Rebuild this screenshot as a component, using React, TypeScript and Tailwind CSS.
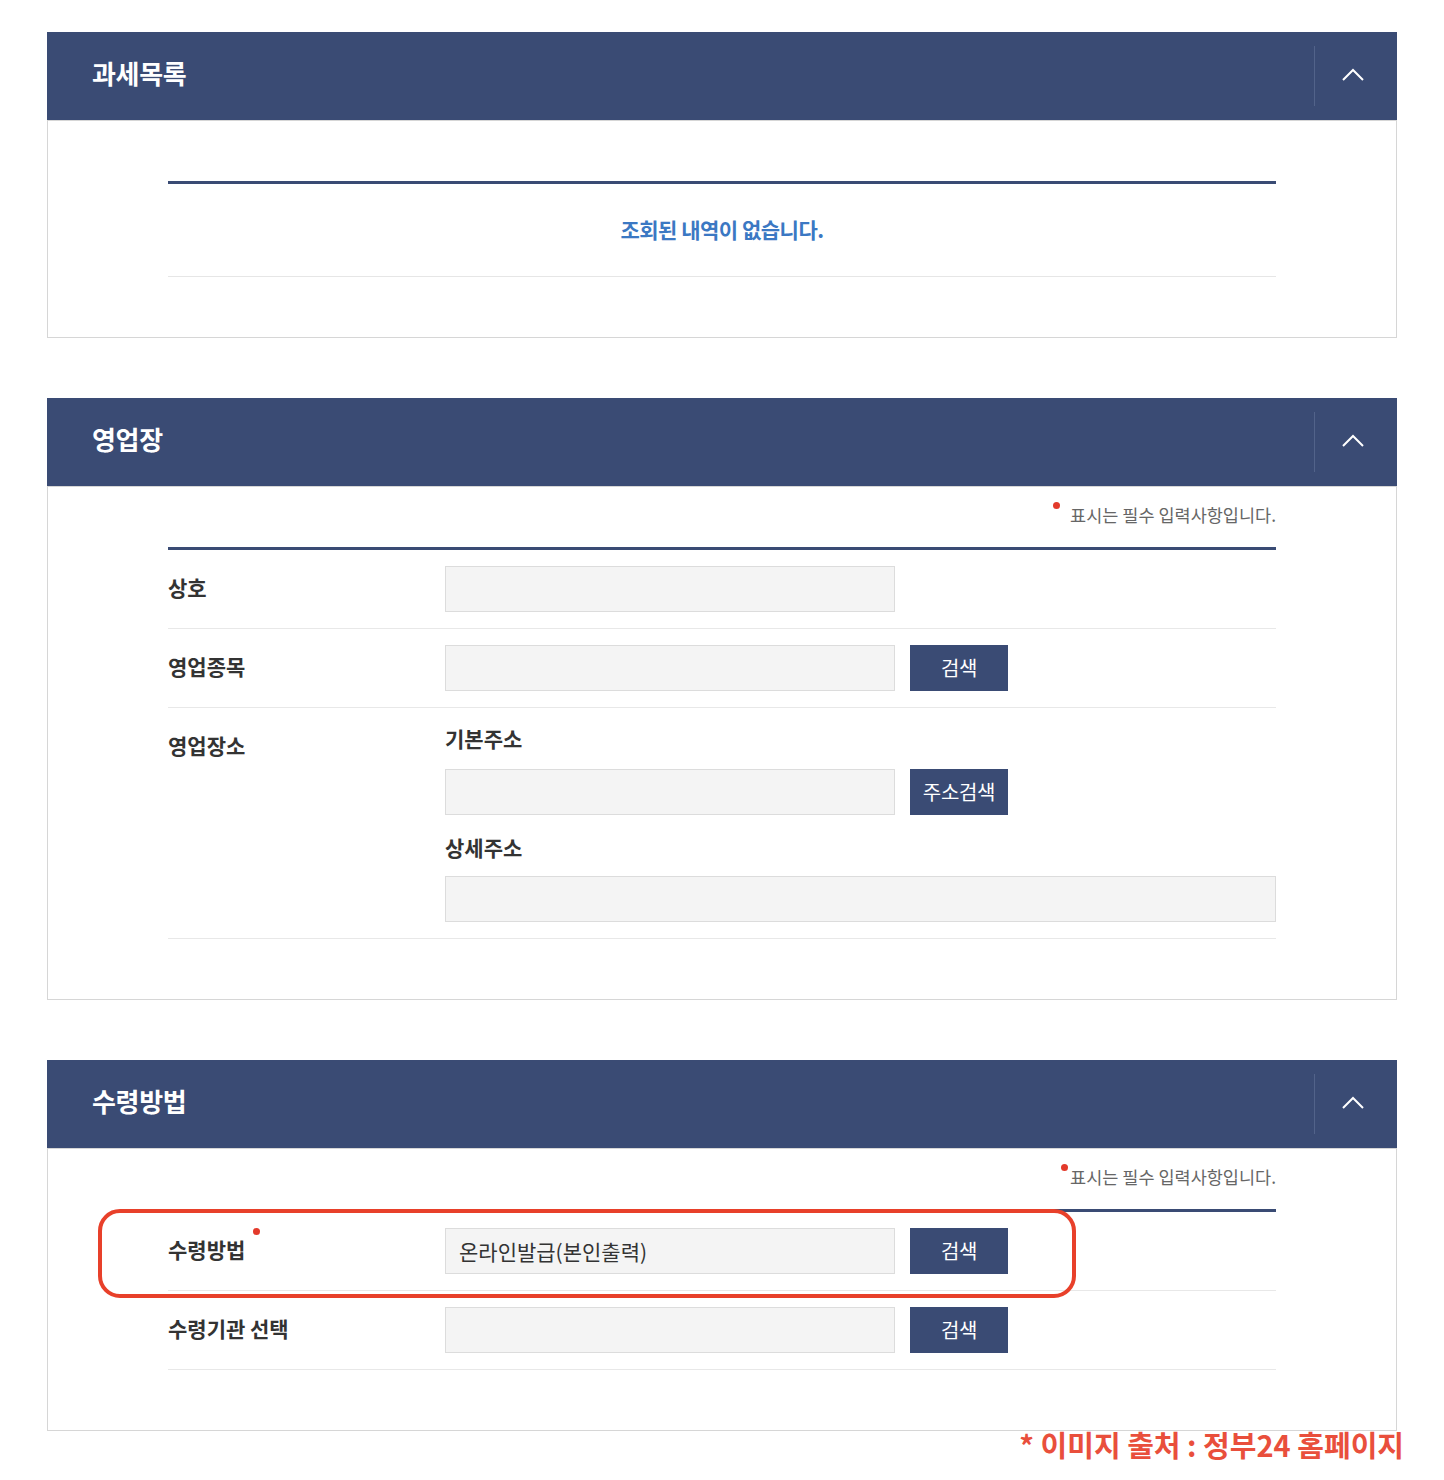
import React from "react";

const FONT = { fontFamily: '"Noto Sans CJK KR", "Noto Sans", sans-serif' };

function Header({ title }: { title: string }) {
  return (
    <div className="flex h-[88px] items-center bg-[#3a4b74]">
      <div className="flex-1 pb-[6px] pl-[45px] text-[26px] font-bold leading-none tracking-[-0.3px] text-white">
        {title}
      </div>
      <div className="flex h-full w-[83px] items-center">
        <div className="h-[60px] border-l border-[#52638a]" />
        <div className="flex flex-1 items-center justify-center pb-[3px] pr-[6px]">
          <svg width="22" height="13" viewBox="0 0 22 13" fill="none">
            <polyline points="1,12 11,2 21,12" stroke="#ffffff" strokeWidth="2" />
          </svg>
        </div>
      </div>
    </div>
  );
}

function RequiredNote({ attached }: { attached?: boolean }) {
  return (
    <div className="flex h-[24px] items-center justify-end">
      <span className="relative text-[17.5px] leading-[24px] tracking-[0px] text-[#666666]">
        <span
          className={`absolute top-[-1px] h-[7px] w-[7px] rounded-full bg-[#e33a2b] ${attached ? "left-[-9px]" : "left-[-17px]"}`}
        />
        표시는 필수 입력사항입니다.
      </span>
    </div>
  );
}

function Input({ value, wide }: { value?: string; wide?: boolean }) {
  return (
    <div
      className={`flex h-[46px] items-center border border-[#dcdcdc] bg-[#f4f4f4] pl-[13px] text-[21px] leading-none tracking-[0px] text-[#333333] ${wide ? "w-full" : "w-[450px]"}`}
    >
      {value}
    </div>
  );
}

function Btn({ label }: { label: string }) {
  return (
    <div className="ml-[15px] flex h-[46px] w-[98px] items-center justify-center bg-[#3a4b74] text-[20px] leading-none tracking-[-0.3px] text-white">
      {label}
    </div>
  );
}

function Label({ children }: { children: React.ReactNode }) {
  return (
    <div className="w-[277px] shrink-0 pb-[4px] text-[21px] font-bold leading-[30px] tracking-[0px] text-[#333333]">
      {children}
    </div>
  );
}

export default function App() {
  return (
    <div className="min-h-[1480px] bg-white pt-[32px]" style={FONT}>
      <div className="mx-[47px] flex flex-col gap-[60px]">
        {/* 과세목록 */}
        <section>
          <Header title="과세목록" />
          <div className="border border-[#d6d6d6] px-[120px] pb-[60px] pt-[60px]">
            <div className="border-t-[3px] border-[#3a4b74]" />
            <div className="flex h-[93px] items-center justify-center border-b border-[#e6e6e6] text-[21px] font-bold tracking-[-0.5px] text-[#3b78c3]">
              조회된 내역이 없습니다.
            </div>
          </div>
        </section>

        {/* 영업장 */}
        <section>
          <Header title="영업장" />
          <div className="border border-[#d6d6d6] px-[120px] pb-[60px] pt-[16px]">
            <RequiredNote />
            <div className="mt-[20px] border-t-[3px] border-[#3a4b74]" />
            <div className="flex items-center border-b border-[#e8e8e8] py-[16px]">
              <Label>상호</Label>
              <Input />
            </div>
            <div className="flex items-center border-b border-[#e8e8e8] py-[16px]">
              <Label>영업종목</Label>
              <Input />
              <Btn label="검색" />
            </div>
            <div className="flex items-start border-b border-[#e8e8e8] pb-[16px] pt-[16px]">
              <div className="pt-[6px]">
                <Label>영업장소</Label>
              </div>
              <div className="flex flex-1 flex-col">
                <div className="mb-[15px] pb-[2px] text-[21px] font-bold leading-[28px] tracking-[0px] text-[#333333]">
                  기본주소
                </div>
                <div className="flex items-center">
                  <Input />
                  <Btn label="주소검색" />
                </div>
                <div className="mb-[13px] mt-[18px] pb-[2px] text-[21px] font-bold leading-[28px] tracking-[0px] text-[#333333]">
                  상세주소
                </div>
                <Input wide />
              </div>
            </div>
          </div>
        </section>

        {/* 수령방법 */}
        <section>
          <Header title="수령방법" />
          <div className="border border-[#d6d6d6] px-[120px] pb-[60px] pt-[16px]">
            <RequiredNote attached />
            <div className="mt-[20px] border-t-[3px] border-[#3a4b74]" />
            <div className="relative flex items-center border-b border-[#e8e8e8] py-[16px]">
              <Label>
                <span className="relative">
                  수령방법
                  <span className="absolute right-[-15px] top-[-6px] h-[7px] w-[7px] rounded-full bg-[#e33a2b]" />
                </span>
              </Label>
              <Input value="온라인발급(본인출력)" />
              <Btn label="검색" />
              <div className="absolute left-[-70px] top-[-3px] h-[89px] w-[978px] rounded-[22px] border-4 border-[#e8402a]" />
            </div>
            <div className="flex items-center border-b border-[#e8e8e8] py-[16px]">
              <Label>수령기관 선택</Label>
              <Input />
              <Btn label="검색" />
            </div>
          </div>
        </section>
      </div>
      <div className="flex justify-end pr-[40px]">
        <div className="text-[29px] font-bold leading-[26px] tracking-[0px] text-[#e94f3c]">
          * 이미지 출처 : 정부24 홈페이지
        </div>
      </div>
    </div>
  );
}
